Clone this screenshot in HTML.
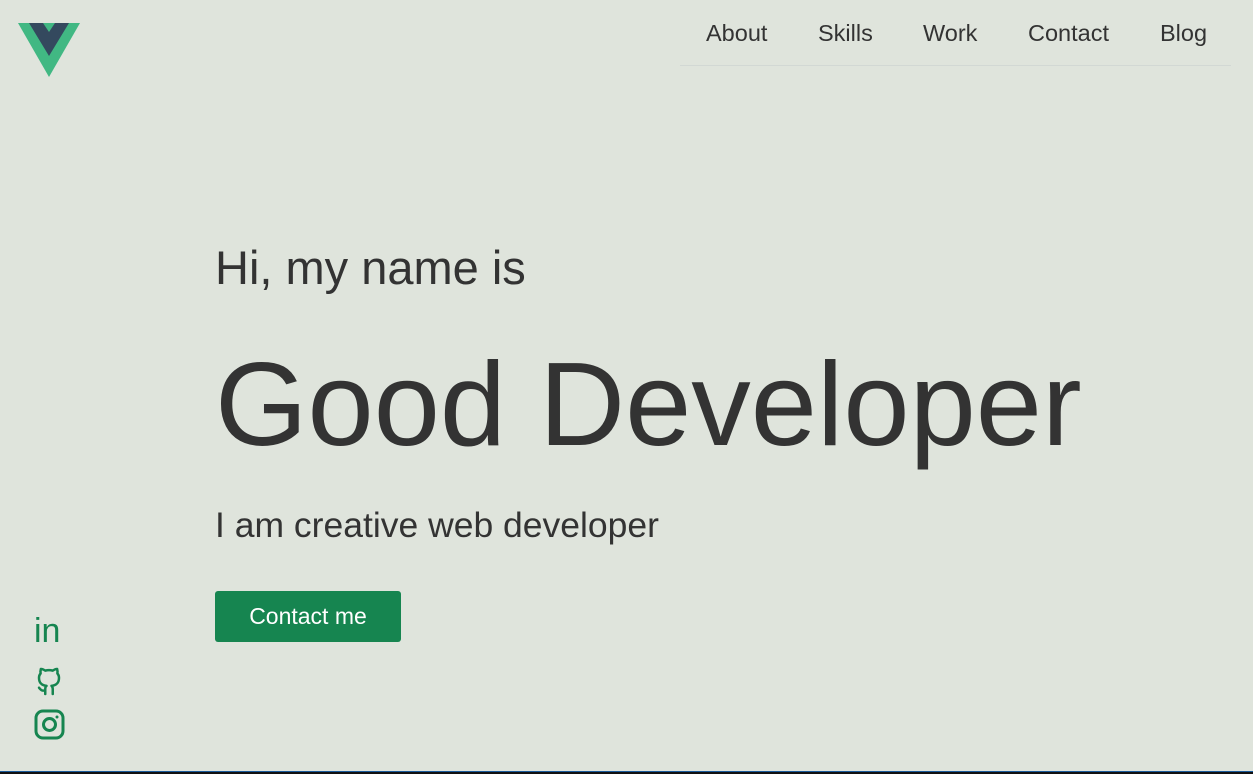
<!DOCTYPE html>
<html><head><style>
*{margin:0;padding:0;box-sizing:border-box}
body{width:1253px;height:774px;background:#dfe4dc;font-family:"Liberation Sans",Arial,sans-serif;color:#333;position:relative;overflow:hidden}
.bot{position:absolute;left:0;right:0;bottom:0;height:3px;background:#111;border-top:1px solid #1a5a9a}
nav{position:absolute;left:680px;top:0;width:551px;height:66px;border-bottom:1px solid #d2d8d4}
nav span{position:absolute;top:20px;font-size:23.5px;color:#333}
.t{position:absolute;left:215px;white-space:nowrap}
.btn{position:absolute;left:215px;top:591px;width:186px;height:51px;background:#168550;border-radius:3px;color:#fff;font-size:23px;text-align:center;line-height:51px}
</style></head><body>
<svg style="position:absolute;left:18px;top:23px" width="62" height="54" viewBox="0 0 62 54">
<polygon points="0,0 62,0 31,54" fill="#41b883"/>
<polygon points="11,0 25,0 31,9 37,0 51,0 31,33" fill="#34495e"/>
</svg>
<nav>
<span style="left:26px">About</span><span style="left:138px">Skills</span><span style="left:243px">Work</span><span style="left:348px">Contact</span><span style="left:480px">Blog</span>
</nav>
<div class="t" style="top:240px;font-size:47px">Hi, my name is</div>
<div class="t" style="top:336px;font-size:119px;left:215px">Good Developer</div>
<div class="t" style="top:505px;font-size:35.5px">I am creative web developer</div>
<div class="btn">Contact me</div>
<div style="position:absolute;left:34px;top:614px;font-size:34px;color:#168550;line-height:1">in</div>
<svg style="position:absolute;left:34px;top:662px" width="30" height="34" viewBox="0 0 24 26" fill="none" stroke="#168550" stroke-width="2" stroke-linecap="round" stroke-linejoin="round">
<path d="M9 25v-4c0-1 .3-2 1-2.5-3-.4-6-1.5-6-6.5 0-1.4.5-2.6 1.3-3.5-.2-.9-.2-2 .2-3.5 0 0 1.2-.3 3.5 1.3a12 12 0 0 1 6 0C17.3 4.7 18.5 5 18.5 5c.4 1.5.4 2.6.2 3.5.8.9 1.3 2.1 1.3 3.5 0 5-3 6.1-6 6.5.7.6 1 1.5 1 2.5v4M9 22c-3 1-4-1-5-2"/>
</svg>
<svg style="position:absolute;left:34px;top:709px" width="31" height="31" viewBox="0 0 31 31" fill="none" stroke="#168550" stroke-width="3">
<rect x="2" y="2" width="27" height="27" rx="7"/><circle cx="15.5" cy="15.5" r="6"/><circle cx="23" cy="8" r="1" fill="#168550" stroke-width="1"/>
</svg>
<div class="bot"></div>
</body></html>
